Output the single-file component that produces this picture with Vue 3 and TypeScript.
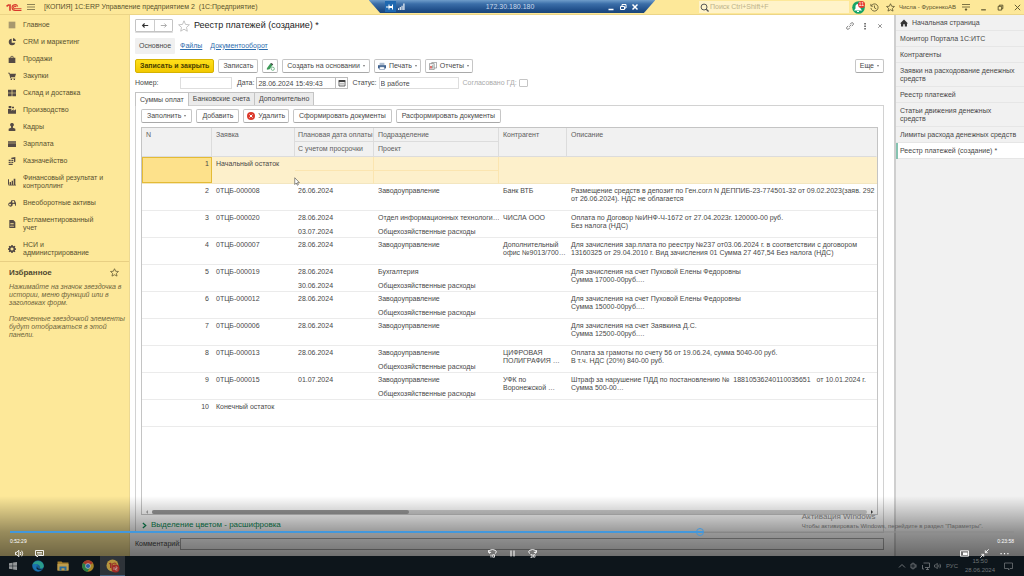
<script setup lang="ts">
import { ref } from 'vue'

interface Section { label: string; icon: string }
interface Payment {
  n: number
  request: string
  date?: string
  overdue?: string
  department?: string
  project?: string
  partner?: string
  description?: string
}

const sections: Section[] = [
  { label: 'Главное', icon: 'M1 1h10v10H1z' },
  { label: 'CRM и маркетинг', icon: 'M5.500 1A5 5 0 1 0 11 7H5.500zM7.500 0v4.500H12A5 5 0 0 0 7.500 0z' },
  { label: 'Продажи', icon: 'M1 4h2.500a2.500 3 0 0 1 5 0H11v8H1zM4.700 4h2.600a1.300 1.800 0 0 0-2.600 0z' },
  { label: 'Закупки', icon: 'M0 1h2.500l.5 1.500h9L10.500 7.500H4.500l.3 1H11v1H3.500L1.700 2.200H0zM4 10h2v2H4zM8.500 10h2v2h-2z' },
  { label: 'Склад и доставка', icon: 'M0 1h5.500v4.500H0zM6.500 1H12v4.500H6.500zM0 6.500h5.500V11H0zM6.500 6.500H12V11H6.500z' },
  { label: 'Производство', icon: 'M1 0h4v3.500H1zM0 4.500h5v2.500l3.500-2V7L12 5v6.500H0zM6 1h3v2.500H6z' },
  { label: 'Кадры', icon: 'M6 0a2.700 2.700 0 0 1 1.500 5L7.300 7 11 8.500V12H1V8.500L4.700 7 4.500 5A2.700 2.700 0 0 1 6 0z' },
  { label: 'Зарплата', icon: 'M0 2h12v2H0zM0 5h12v5.500H0z' },
  { label: 'Казначейство', icon: 'M5 1l6-1v7L9 8V3H5zM1 4h3v2H1zM5 4h3v2H5zM1 7h3v2H1zM5 7h3v2H5zM1 10h6v2H1z' },
  { label: 'Финансовый результат и контроллинг', icon: 'M0 2h1.500v9H0zM2.500 6h2v4h-2zM5.500 4h2v6h-2zM8.500 1h2.500v9H8.500zM0 10h12v1.200H0z' },
  { label: 'Внеоборотные активы', icon: 'M5 2h5l2 4v4h-1.500a2 2 0 1 0-3.500 0H6.200A3.200 3.200 0 1 1 4 5zM3 7a1.300 1.300 0 1 0 .1 0zM6.500 3v2.500h3L9 3z' },
  { label: 'Регламентированный учет', icon: 'M2 0h6l3 3v9H2zM3.500 5v1h5V5zM3.500 7v1h5V7zM3.500 9v1h2V9zM6.500 9v1h2V9z' },
  { label: 'НСИ и администрирование', icon: 'M5 0h2l.4 1.500 1 .4L9.800 1l1.300 1.300-.9 1.400.4 1L12 5v2l-1.400.4-.4 1 .9 1.300L9.800 11l-1.400-.8-1 .4L7 12H5l-.4-1.400-1-.4-1.300.8L1 9.700l.8-1.300-.4-1L0 7V5l1.400-.3.4-1L1 2.300 2.300 1l1.300.9 1-.4zM6 3.700A2.300 2.300 0 1 0 6.010 3.700z' },
]

const windows: string[] = [
  'Монитор Портала 1С:ИТС',
  'Контрагенты',
  'Заявки на расходование денежных средств',
  'Реестр платежей',
  'Статьи движения денежных\nсредств',
  'Лимиты расхода денежных средств',
  'Реестр платежей (создание) *',
]

const overhead = 'Общехозяйственные расходы'
const plant = 'Заводоуправление'

const payments: Payment[] = [
  { n: 1, request: 'Начальный остаток' },
  { n: 2, request: '0ТЦБ-000008', date: '26.06.2024', department: plant, partner: 'Банк ВТБ', description: 'Размещение средств в депозит по Ген.согл N ДЕППИБ-23-774501-32 от 09.02.2023(заяв. 292 от 26.06.2024). НДС не облагается' },
  { n: 3, request: '0ТЦБ-000020', date: '28.06.2024', overdue: '03.07.2024', department: 'Отдел информационных технологи…', project: overhead, partner: 'ЧИСЛА ООО', description: 'Оплата по Договор №ИНФ-Ч-1672 от 27.04.2023г. 120000-00 руб.\nБез налога (НДС)' },
  { n: 4, request: '0ТЦБ-000007', date: '28.06.2024', department: plant, partner: 'Дополнительный\nофис №9013/700…', description: 'Для зачисления зар.плата по реестру №237 от03.06.2024 г. в соответствии с договором\n13160325 от 29.04.2010 г. Вид зачисления 01 Сумма 27 467,54 Без налога (НДС)' },
  { n: 5, request: '0ТЦБ-000019', date: '28.06.2024', overdue: '30.06.2024', department: 'Бухгалтерия', project: overhead, description: 'Для зачисления на счет Пуховой Елены Федоровны\nСумма 17000-00руб.…' },
  { n: 6, request: '0ТЦБ-000012', date: '28.06.2024', department: plant, project: overhead, description: 'Для зачисления на счет Пуховой Елены Федоровны\nСумма 15000-00руб.…' },
  { n: 7, request: '0ТЦБ-000006', date: '28.06.2024', department: plant, description: 'Для зачисления на счет Заявкина Д.С.\nСумма 12500-00руб.…' },
  { n: 8, request: '0ТЦБ-000013', date: '28.06.2024', department: plant, project: overhead, partner: 'ЦИФРОВАЯ\nПОЛИГРАФИЯ …', description: 'Оплата за грамоты по счету 56 от 19.06.24, сумма 5040-00 руб.\nВ т.ч. НДС (20%) 840-00 руб.' },
  { n: 9, request: '0ТЦБ-000015', date: '01.07.2024', department: plant, project: overhead, partner: 'УФК по\nВоронежской …', description: 'Штраф за нарушение ПДД по постановлению №  18810536240110035651   от 10.01.2024 г.\nСумма 500-00…' },
  { n: 10, request: 'Конечный остаток' },
]

const docNumber = ref('')
const docDate = ref('28.06.2024 15:49:43')
const status = ref('В работе')
const comment = ref('')
const search = ref('')
const approved = ref(false)
const selected = ref(1)
const progress = 69
</script>

<template>
  <div class="screen">
    <header class="titlebar">
      <svg class="logo" viewBox="0 0 30 16" aria-label="1C">
        <path d="M1 6l4.500-3.500M7.500 2v12" fill="none" stroke="#d8382c" stroke-width="3" />
        <path d="M22 6A5.500 5.500 0 1 0 17 13.500h12M19 7A2.500 2.500 0 1 0 17 10.500h12" fill="none" stroke="#d8382c" stroke-width="2" />
      </svg>
      <button class="plain" aria-label="Меню"><svg class="i8" viewBox="0 0 8 8"><path d="M0 1.500h8M0 4h8M0 6.500h8" stroke="#8d8355" /></svg></button>
      <span class="app-name">[КОПИЯ] 1С:ERP Управление предприятием 2&nbsp; (1С:Предприятие)</span>
      <label class="search">
        <svg class="i9" viewBox="0 0 10 10"><circle cx="4.500" cy="4.500" r="3.300" fill="none" stroke="#555" stroke-width="1.100" /><path d="M7 7l2.500 2.500" stroke="#555" stroke-width="1.500" /></svg>
        <input v-model="search" type="text" placeholder="Поиск Ctrl+Shift+F" aria-label="Поиск" />
      </label>
      <button class="bell" aria-label="Уведомления">
        <svg viewBox="0 0 13 13"><circle cx="6.500" cy="6.500" r="6.300" fill="#16a468" /><path d="M6 3a2.500 2.500 0 0 1 2.500 2.500v2L10 9.500H2l1.500-2v-2A2.500 2.500 0 0 1 6 3zM5 10h2v1H5z" fill="#fff" /></svg>
        <span class="badge">11</span>
      </button>
      <button class="plain" aria-label="История"><svg class="i9" viewBox="0 0 10 10"><path d="M1.500 3A4 4 0 1 1 1 5.500M1 1v2.500h2.500M5 2.800v2.700l2 1" fill="none" stroke="#5a532e" stroke-width=".9" /></svg></button>
      <button class="plain" aria-label="Избранное"><svg class="i9" viewBox="0 0 10 10"><path d="M5 .8l1.300 2.800 3.100.3-2.300 2.100.7 3L5 7.500 2.200 9l.7-3L.6 3.900l3.100-.3z" fill="none" stroke="#5a532e" stroke-width=".9" /></svg></button>
      <span class="user">Числа - ФурсенкоАВ</span>
      <button class="plain" aria-label="Настройки"><svg class="i8" viewBox="0 0 8 8"><path d="M0 1.500h8M0 4h8M3 6h2l-1 1.500z" stroke="#5a532e" stroke-width=".8" fill="#5a532e" /></svg></button>
      <div class="win-buttons">
        <button class="plain" aria-label="Свернуть"><svg class="i6" viewBox="0 0 6 6"><path d="M1 5h4" stroke="#5a532e" /></svg></button>
        <button class="plain" aria-label="Развернуть"><svg class="i6" viewBox="0 0 6 6"><path d="M1 2h3v3.200H1zM2 2V1h3v3H4" fill="none" stroke="#5a532e" stroke-width=".8" /></svg></button>
        <button class="plain" aria-label="Закрыть"><svg class="i6" viewBox="0 0 6 6"><path d="M.7.7l4.600 4.600M5.300.7L.7 5.300" stroke="#5a532e" stroke-width=".8" /></svg></button>
      </div>
    </header>

    <div class="rdp">
      <span class="pin"><svg viewBox="0 0 8 6"><path d="M0 3h3M3 .5v5M6.500 .5v5" fill="none" stroke="#fff" /><path d="M3 2h3.500v2H3z" fill="#fff" /></svg></span>
      <svg class="signal" viewBox="0 0 8 8"><path d="M0 6h1.300v2H0zM2 4.500h1.300V8H2zM4 3h1.300v5H4zM6 .5h1.500V8H6z" fill="#e8eef5" /></svg>
      <span class="address">172.30.180.180</span>
      <svg class="rdp-btn" viewBox="0 0 8 8"><path d="M1.500 6.500h5" stroke="#fff" stroke-width="1.300" /></svg>
      <svg class="rdp-btn" viewBox="0 0 8 8"><path d="M1.500 3.500h4v3h-4zM3 3V1.500h4V5H6" fill="none" stroke="#fff" /></svg>
      <svg class="rdp-btn" viewBox="0 0 8 8"><path d="M1.500 1.500l5 5M6.500 1.500l-5 5" stroke="#fff" stroke-width="1.500" /></svg>
    </div>

    <div class="body">
      <aside class="sidebar">
        <nav class="sections">
          <a v-for="(s, i) in sections" :key="s.label" href="#" class="section">
            <svg class="i8" :class="{ faded: i === 0 }" viewBox="0 0 12 12"><path :d="s.icon" fill="#544a45" fill-rule="evenodd" /></svg>
            <span>{{ s.label }}</span>
          </a>
        </nav>
        <section class="favorites">
          <h2>Избранное
            <svg class="i9" viewBox="0 0 10 10"><path d="M5 .8l1.300 2.800 3.100.3-2.300 2.100.7 3L5 7.500 2.200 9l.7-3L.6 3.900l3.100-.3z" fill="none" stroke="#655d37" stroke-width=".9" /></svg>
          </h2>
          <p>Нажимайте на значок звездочка в истории, меню функций или в заголовках форм.</p>
          <p>Помеченные звездочкой элементы будут отображаться в этой панели.</p>
        </section>
      </aside>

      <main class="form">
        <div class="heading">
          <div class="history">
            <button aria-label="Назад"><svg viewBox="0 0 10 8"><path d="M9 4H2M4.500 1.500L2 4l2.500 2.500" fill="none" stroke="#333" stroke-width="1.400" /></svg></button>
            <button aria-label="Вперед"><svg viewBox="0 0 10 8"><path d="M1 4h7M5.500 1.500L8 4 5.500 6.500" fill="none" stroke="#aaa" stroke-width="1.200" /></svg></button>
          </div>
          <svg class="i12" viewBox="0 0 12 12"><path d="M6 .8l1.500 3.600 3.900.4-2.900 2.600.8 3.800L6 9.200l-3.300 2 .8-3.800L.6 4.800l3.900-.4z" fill="none" stroke="#b5b5b5" stroke-width=".8" /></svg>
          <h1>Реестр платежей (создание) *</h1>
          <div class="form-tools">
            <button class="plain" aria-label="Ссылка"><svg class="i8" viewBox="0 0 10 10"><path d="M4 6l2.500-2.500M5 3l1.500-1.700a1.600 1.600 0 0 1 2.300 2.300L7.200 5.200M5 7L3.500 8.700a1.600 1.600 0 0 1-2.300-2.300L2.800 4.800" fill="none" stroke="#666" /></svg></button>
            <button class="plain" aria-label="Еще"><svg class="i8" viewBox="0 0 8 8"><path d="M3.300 1h1.500v1.500H3.300zM3.300 3.500h1.500V5H3.300zM3.300 6h1.500v1.500H3.300z" fill="#555" /></svg></button>
            <button class="plain" aria-label="Закрыть форму"><svg class="i8" viewBox="0 0 8 8"><path d="M2.200 2.200l3.600 3.600M5.800 2.200L2.200 5.800" stroke="#777" stroke-width=".8" /></svg></button>
          </div>
        </div>

        <nav class="links">
          <span class="current">Основное</span>
          <a href="#">Файлы</a>
          <a href="#">Документооборот</a>
        </nav>

        <div class="bar commands">
          <button class="btn primary">Записать и закрыть</button>
          <button class="btn">Записать</button>
          <button class="btn square" aria-label="Провести"><svg class="i9" viewBox="0 0 10 10"><path d="M1 7l4-5.500L7.500 3 4 8l-3 .5z" fill="#3c9a58" /><path d="M5 2l1-1 2 1.500-.7 1z" fill="#444" /><circle cx="7.500" cy="7.500" r="1.800" fill="#fff" stroke="#4aa565" stroke-width=".8" /></svg></button>
          <button class="btn">Создать на основании<i class="caret" /></button>
          <button class="btn iconed"><svg class="i8" viewBox="0 0 10 10"><path d="M2 1h6v3H2z" fill="#aebdd0" /><path d="M0 4h10v4H0z" fill="#3d5f8c" /><path d="M2 6h6v3.500H2z" fill="#fff" stroke="#3d5f8c" stroke-width=".6" /></svg>Печать<i class="caret" /></button>
          <button class="btn iconed"><svg class="i8" viewBox="0 0 10 10"><path d="M3.500.5h6v7h-6z" fill="#fff" stroke="#777" stroke-width=".8" /><path d="M.5 2h6v7.500h-6z" fill="#f4f4f4" stroke="#777" stroke-width=".8" /><path d="M1.500 5h2v3h-2z" fill="#d9534f" /><path d="M4 4h1.300v4H4z" fill="#8aa39a" /></svg>Отчеты<i class="caret" /></button>
          <button class="btn more">Еще<i class="caret" /></button>
        </div>

        <div class="fields">
          <label class="f-number"><span>Номер:</span><input v-model="docNumber" type="text" /></label>
          <label class="f-date"><span>Дата:</span><input v-model="docDate" type="text" /></label>
          <button class="calendar" aria-label="Выбрать дату"><svg viewBox="0 0 8 8"><path d="M1 2.500h6v4.500H1z" fill="#fff" stroke="#444" stroke-width=".8" /><path d="M.6 1h6.800v2H.6z" fill="#444" /><path d="M2 4.700h4M3 3.500v3M5 3.500v3" stroke="#888" stroke-width=".5" /></svg></button>
          <label class="f-status"><span>Статус:</span><input v-model="status" type="text" /></label>
          <label class="f-approved"><span>Согласовано ГД:</span><input v-model="approved" type="checkbox" disabled /></label>
        </div>

        <div class="tabs">
          <button class="active">Суммы оплат</button>
          <button>Банковские счета</button>
          <button>Дополнительно</button>
        </div>

        <section class="panel">
          <div class="bar">
            <button class="btn">Заполнить<i class="caret" /></button>
            <button class="btn">Добавить</button>
            <button class="btn iconed">
              <svg class="i8" viewBox="0 0 8 8"><circle cx="4" cy="4" r="4" fill="#dc3a2d" /><path d="M2.500 2.500l3 3M5.500 2.500l-3 3" stroke="#fff" /></svg>Удалить</button>
            <button class="btn">Сформировать документы</button>
            <button class="btn">Расформировать документы</button>
          </div>

          <div class="grid-box">
            <table>
              <colgroup><col class="c-n" /><col class="c-req" /><col class="c-date" /><col class="c-dep" /><col class="c-part" /><col /></colgroup>
              <thead>
                <tr><th rowspan="2">N</th><th rowspan="2">Заявка</th><th>Плановая дата оплаты</th><th>Подразделение</th><th rowspan="2">Контрагент</th><th rowspan="2">Описание</th></tr>
                <tr><th class="second">С учетом просрочки</th><th class="second">Проект</th></tr>
              </thead>
              <tbody>
                <tr v-for="p in payments" :key="p.n" :class="{ selected: p.n === selected }" @click="selected = p.n">
                  <td class="num">{{ p.n }}</td>
                  <td>{{ p.request }}</td>
                  <td class="pair"><div>{{ p.date }}</div><div>{{ p.overdue }}</div></td>
                  <td class="pair"><div>{{ p.department }}</div><div>{{ p.project }}</div></td>
                  <td class="multi">{{ p.partner }}</td>
                  <td class="multi">{{ p.description }}</td>
                </tr>
              </tbody>
            </table>
            <div class="scroll"><i class="arrow left" /><div class="track"><div class="thumb" /></div><i class="arrow right" /></div>
          </div>

          <button class="legend"><svg viewBox="0 0 6 8"><path d="M1 1l3.500 3L1 7" fill="none" stroke="#0b8a55" stroke-width="1.500" /></svg>Выделение цветом - расшифровка</button>
        </section>

        <label class="comment"><span>Комментарий:</span><input v-model="comment" type="text" /></label>
      </main>

      <nav class="windows">
        <a href="#" class="home"><svg class="i8" viewBox="0 0 10 10"><path d="M5 .5L10 5.500H8.700V9.500H6V6.500H4v3H1.300v-4H0z" fill="#333" /></svg>Начальная страница</a>
        <a v-for="(w, i) in windows" :key="w" href="#" :class="{ open: i === windows.length - 1 }">{{ w }}</a>
      </nav>
    </div>

    <footer class="taskbar">
      <button aria-label="Пуск"><svg class="i8" viewBox="0 0 8 8"><path d="M0 1.200L3.600.7v3H0zM4.100.6L8 0v3.700H4.100zM0 4.200h3.600v3L0 6.800zM4.100 4.200H8V8l-3.900-.6z" fill="#a4a8aa" /></svg></button>
      <button aria-label="Edge"><svg class="i12" viewBox="0 0 12 12"><circle cx="6" cy="6" r="5.800" fill="#1769a5" /><path d="M.5 5A5.800 5.800 0 0 1 11.800 6c0 2-1.800 2.800-3.800 2.300C9 5 5 3 .5 5z" fill="#2fae9b" /><path d="M4.500 6c-1 3 1.500 5 5 4.300A5.800 5.800 0 0 1 .6 4.800C2 3.700 5 4 6.300 5z" fill="#1d7fc4" /><path d="M5 6.500c0 2 2.500 3 5.500 2.300-1 1-5 1.700-6-.3z" fill="#0c2536" /></svg></button>
      <button aria-label="Проводник"><svg class="i12" viewBox="0 0 12 12"><path d="M.5 1.500h4l1 1h6v8H.5z" fill="#b98e32" /><path d="M.5 4h11v6.500H.5z" fill="#d3ae55" /><path d="M2.500 6.500h7v4h-2V8.300h-3v2.200h-2z" fill="#2e77ad" /></svg></button>
      <button aria-label="Chrome"><svg class="i12" viewBox="0 0 12 12"><circle cx="6" cy="6" r="5.800" fill="#b9942a" /><path d="M6 6L1 3a5.800 5.800 0 0 1 10 0z" fill="#b8402f" /><path d="M6 6L1 3a5.800 5.800 0 0 0 4.500 8.800L8 7.500z" fill="#2b8a4b" /><circle cx="6" cy="6" r="2.700" fill="#c6cacc" /><circle cx="6" cy="6" r="2.100" fill="#2f6bb8" /></svg></button>
      <button class="running" aria-label="1С"><svg class="i14" viewBox="0 0 14 14"><circle cx="6.500" cy="6.500" r="6" fill="#c9a545" /><path d="M3 5l1.500-1v5M6 4v5M10.500 5A2.500 2.500 0 1 0 9 9" fill="none" stroke="#a3352a" /><circle cx="9.500" cy="9.500" r="4" fill="#b3302a" /><path d="M8 8v3M9.500 8h1.500v1.500H9.500V11h2" fill="none" stroke="#d9b7b3" stroke-width=".8" /></svg></button>
      <div class="tray">
        <svg class="i8" viewBox="0 0 8 8"><path d="M1 5.500l3-3 3 3" fill="none" stroke="#7b8083" /></svg>
        <svg class="i8" viewBox="0 0 8 8"><path d="M1 2h4v4H1zM3 2V.5M3 6v1.500M6 2.500v3M2.500 4h1" fill="none" stroke="#7b8083" stroke-width=".9" /></svg>
        <svg class="i8" viewBox="0 0 8 8"><path d="M1.500 1H7.500v4.500H3M4 7.500h3M5.500 5.500v2M.5 3v4h1.500" fill="none" stroke="#7b8083" stroke-width=".9" /></svg>
        <svg class="i8" viewBox="0 0 8 8"><path d="M.5 3h1l1.700-1.700v5.400L1.500 5h-1zM4.500 2.800q1 1.200 0 2.400M5.800 1.800q1.700 2.200 0 4.400" fill="none" stroke="#7b8083" stroke-width=".8" /></svg>
        <span class="lang">РУС</span>
        <time><span>15:50</span><span>28.06.2024</span></time>
        <svg class="i9" viewBox="0 0 9 9"><path d="M.5 1h8v5.500H6L4.500 8V6.500h-4z" fill="none" stroke="#7b8083" stroke-width=".8" /></svg>
      </div>
    </footer>

    <div class="watermark"><strong>Активация Windows</strong><span>Чтобы активировать Windows, перейдите в раздел "Параметры".</span></div>

    <div class="player">
      <div class="timeline"><div class="played" :style="{ width: progress + '%' }"><i class="knob" /></div></div>
      <div class="times"><span>0:52:29</span><span>0:23:58</span></div>
      <div class="controls">
        <div class="group left">
          <button aria-label="Громкость"><svg class="i9" viewBox="0 0 9 9"><path d="M.5 3.300h1.300l2-2v6.400l-2-2H.5zM5.300 3q1 1.500 0 3M6.700 1.700q2 2.800 0 5.600" fill="none" stroke="#fff" stroke-width=".9" /></svg></button>
          <button aria-label="Субтитры"><svg class="i9" viewBox="0 0 9 9"><path d="M.5 1.500h8v5H3.500L2 8V6.500H.5z" fill="none" stroke="#fff" stroke-width=".9" /><path d="M2 3.500h5M2 5h5" stroke="#fff" stroke-width=".8" /></svg></button>
        </div>
        <div class="group center">
          <button aria-label="Назад на 10 секунд"><svg class="i9" viewBox="0 0 9 9"><path d="M2 4.500A3.800 2.200 0 1 1 7 4.500M.7 1v2.400h2.400" fill="none" stroke="#fff" stroke-width=".9" /><path d="M3 5.500v3M4.700 5.700h1.800v2.500H4.700z" fill="none" stroke="#fff" stroke-width=".8" /></svg></button>
          <button aria-label="Пауза"><svg class="i9" viewBox="0 0 9 9"><path d="M3 1.500v6M6 1.500v6" stroke="#fff" /></svg></button>
          <button aria-label="Вперед на 30 секунд"><svg class="i9" viewBox="0 0 9 9"><path d="M7 4.500A3.800 2.200 0 1 0 2 4.500M8.300 1v2.400H5.900" fill="none" stroke="#fff" stroke-width=".9" /><path d="M2.500 5.500h1.700v3H2.500M2.800 7h1.400M5.500 5.700h1.500v2.500H5.500z" fill="none" stroke="#fff" stroke-width=".7" /></svg></button>
        </div>
        <div class="group right">
          <button aria-label="Мини-окно"><svg class="i9" viewBox="0 0 9 9"><path d="M.5 1.800h8v5.400h-8z" fill="none" stroke="#fff" stroke-width=".9" /><path d="M3 3.500h4.500v2.500H3z" fill="#fff" /></svg></button>
          <button aria-label="Свернуть видео"><svg class="i9" viewBox="0 0 9 9"><path d="M8.700.3L5.500 3.500M5.300 1.300v2.400h2.400M.3 8.700l3.200-3.200M1.300 5.300h2.400v2.400" fill="none" stroke="#fff" stroke-width=".9" /></svg></button>
          <button aria-label="Другие действия"><svg class="i9" viewBox="0 0 9 9"><path d="M.5 4h1.200v1.200H.5zM3.900 4h1.200v1.200H3.900zM7.300 4h1.200v1.200H7.300z" fill="#fff" /></svg></button>
        </div>
      </div>
    </div>

    <svg class="cursor" viewBox="0 0 8 12"><path d="M1 1v9l2-2 1.500 3 1.300-.7L4.500 7.500h2.700z" fill="#fff" stroke="#444" stroke-width=".8" /></svg>
  </div>
</template>

<style>
html, body { margin: 0; background: #0d161d; }
</style>

<style scoped>
.screen {
  position: relative;
  display: flex;
  flex-direction: column;
  min-height: 100vh;
  font: 7px/8px "Liberation Sans", Arial, sans-serif;
  color: #484848;
  background: #fff;
  overflow: hidden;
}
* { box-sizing: border-box; }
button, input { font: inherit; color: inherit; margin: 0; padding: 0; }
button { border: 0; background: none; white-space: nowrap; }
a { color: inherit; text-decoration: none; }
svg { display: block; flex: none; }
.i6 { width: 7px; height: 7px; }
.i8 { width: 8px; height: 8px; }
.i9 { width: 9px; height: 9px; }
.i12 { width: 12px; height: 12px; }
.i14 { width: 14px; height: 14px; }

.titlebar { display: flex; align-items: center; height: 15px; padding: 0 3px 0 6px; background: #fde899; border-bottom: 1px solid #ecd587; color: #5a532e; }
.logo { width: 16px; height: 9px; margin-right: 5px; }
.app-name { margin-left: 9px; flex: 1; }
.search { display: flex; align-items: center; width: 150px; height: 12px; background: #fff3c9; padding-left: 1px; gap: 1px; }
.search input { flex: 1; min-width: 0; border: 0; background: none; outline: none; }
.search input::placeholder { color: #bdb28a; }
.bell { position: relative; width: 13px; height: 13px; margin: 0 5px 0 3px; }
.bell svg { width: 13px; height: 13px; }
.badge { position: absolute; top: 0; right: 0; width: 7px; height: 7px; border-radius: 4px; background: #e5392d; color: #fff; font-size: 5px; line-height: 7px; text-align: center; }
.titlebar > .bell + .plain { margin-right: 7px; }
.user { margin: 0 6px 0 4px; font-size: 6px; }
.win-buttons { display: flex; gap: 10px; margin-left: 10px; }

.rdp { position: absolute; top: 0; left: 36%; right: 36%; height: 13px; display: flex; align-items: center; padding: 0 16px; color: #c9daec; background: linear-gradient(#6f9dca, #3b6ea8 30%, #21508b 75%, #1c4679); clip-path: polygon(0 0, 100% 0, 96% 100%, 4% 100%); }
.pin { display: grid; place-items: center; width: 11px; height: 11px; background: #1f68b0; }
.pin svg { width: 8px; height: 6px; }
.signal { width: 7px; height: 7px; margin-left: 2px; }
.address { flex: 1; text-align: center; padding-left: 12px; }
.rdp-btn { width: 8px; height: 8px; margin-left: 4px; }

.body { flex: 1; display: flex; }
.sidebar { width: 130px; background: #fde899; border-right: 1px solid #ecd993; color: #58502f; }
.sections { padding-top: 1px; border-bottom: 1px solid #e8cf83; }
.section { display: flex; align-items: center; gap: 7px; padding: 5px 24px 4px 8px; }
.faded { opacity: .5; }
.favorites { padding: 5px 4px 5px 9px; font-style: italic; color: #6f663e; }
.favorites h2 { display: flex; justify-content: space-between; align-items: center; margin: 0 6px 5px 0; font: bold 8px/11px "Liberation Sans", Arial, sans-serif; color: #4f4930; }
.favorites p { margin: 0 0 8px; }

.form { flex: 1; min-width: 0; display: flex; flex-direction: column; padding: 4px 10px 6px 5px; }
.heading { display: flex; align-items: center; height: 13px; }
.history { display: flex; border: 1px solid #c4c4c4; border-radius: 1px; box-shadow: 0 1px 0 #ddd; margin-right: 5px; }
.history button { width: 18px; height: 11px; display: grid; place-items: center; }
.history button + button { border-left: 1px solid #ccc; }
.history svg { width: 8px; height: 7px; }
h1 { margin: 0 0 0 4px; font: 9px/13px "Liberation Sans", Arial, sans-serif; color: #222; }
.form-tools { display: flex; gap: 7px; margin-left: auto; }
.links { display: flex; align-items: center; gap: 8px; margin-top: 5px; height: 17px; }
.links .current { padding: 4px; background: #f0f0f0; border-radius: 1px; margin-right: -3px; }
.links a { color: #2d6dae; text-decoration: underline; }
.bar { display: flex; gap: 4px; }
.commands { margin-top: 5px; }
.btn { display: flex; align-items: center; justify-content: center; height: 14px; padding: 0 5px; border: 1px solid #c6c6c6; border-bottom-color: #a9a9a9; border-radius: 2px; background: #fff; }
.commands .btn { padding: 0 4px; }
.commands .primary { background: linear-gradient(#ffe01a, #f2c800); border-color: #d5b200; font-weight: bold; color: #4a3f00; }
.commands .square { width: 16px; padding: 0; }
.iconed, .commands .iconed { gap: 3px; padding: 0 3px; }
.more { margin-left: auto; }
.caret { width: 0; margin-left: 3px; border: 2px solid transparent; border-top-color: #777; border-bottom: 0; border-left-width: 1px; border-right-width: 1px; }
.iconed .caret { margin-left: 0; }
.commands .more { padding: 0 4px; }
.fields { display: flex; align-items: center; margin-top: 4px; height: 12px; }
.fields label, .comment { display: flex; align-items: center; }
.fields input[type="text"], .comment input { height: 12px; border: 1px solid #dedede; padding: 0 1px; background: #fff; outline: none; }
.f-number span, .comment span { width: 45px; flex: none; }
.f-number input { width: 52px; }
.f-date { margin-left: 5px; }
.f-date input[type="text"] { width: 80px; margin-left: 2px; border-color: #bdbdbd; }
.calendar { display: grid; place-items: center; width: 12px; height: 12px; border: 1px solid #bdbdbd; border-left: 0; }
.calendar svg { width: 8px; height: 8px; }
.f-status { margin-left: 4px; }
.f-status input[type="text"] { width: 80px; margin-left: 2px; }
.f-approved { margin-left: 4px; color: #aaa; }
.f-approved input { appearance: none; width: 9px; height: 8px; margin-left: 2px; border: 1px solid #c5c5c5; border-radius: 1px; }
.tabs { display: flex; margin-top: 3px; }
.tabs button { height: 13px; padding: 0 4px; background: #ebebeb; border: 1px solid #c4c4c4; border-left-width: 0; border-bottom: 0; }
.tabs .active { position: relative; z-index: 1; background: #fff; border-left-width: 1px; margin-bottom: -1px; height: 14px; }

.panel { flex: 1; display: flex; flex-direction: column; border: 1px solid #d2d2d2; padding: 3px 5px 2px; }
.grid-box { flex: 1; display: flex; flex-direction: column; margin-top: 4px; border: 1px solid #c4c4c4; }
table { width: 100%; border-collapse: separate; border-spacing: 0; table-layout: fixed; }
.c-n { width: 70px; }
.c-req { width: 83px; }
.c-date { width: 79px; }
.c-dep { width: 125px; }
.c-part { width: 68px; }
th { padding: 3px 3px 2px 4px; text-align: left; vertical-align: top; font-weight: normal; background: #f1f1f1; border-right: 1px solid #dcdcdc; border-bottom: 1px solid #dcdcdc; color: #606060; white-space: nowrap; height: 14px; }
thead tr:first-child th:last-child { border-right-color: #f1f1f1; }
th.second { height: 15px; }
th:nth-child(3) { padding-right: 0; padding-left: 3px; }
th.second:first-child, td:nth-child(3) { padding-left: 3px; }
td { height: 27px; padding: 3px 3px 0 4px; vertical-align: top; border-bottom: 1px solid #ebebeb; white-space: nowrap; overflow: hidden; }
.num { text-align: right; }
.pair { padding-right: 0; }
.pair div + div { margin-top: 6px; }
.multi { white-space: pre-wrap; padding-right: 0; }
.selected td { background: #fdf0cb; border-bottom-color: #f3e6c0; }
.selected .pair { background: linear-gradient(#fdf0cb 13px, #fbe5b0 13px, #fbe5b0 14px, #fdf0cb 14px); border-right: 1px solid #fbe5b0; }
.selected .num { background: #fde18b; box-shadow: inset 0 0 0 1px #e4bb35; }
.scroll { display: flex; align-items: center; gap: 4px; margin-top: auto; padding: 0 4px; }
.track { flex: 1; height: 4px; border-radius: 2px; background: #cfcfcf; }
.thumb { width: 36%; height: 4px; border-radius: 2px; background: #979797; }
.arrow { width: 0; border: 2px solid transparent; }
.arrow.left { border-left-width: 0; border-right-color: #aaa; }
.arrow.right { border-right-width: 0; border-left-color: #444; }
.legend { align-self: flex-start; display: flex; align-items: center; gap: 4px; margin: 5px 0 0 1px; font-size: 8px; line-height: 10px; color: #0b8a55; }
.legend svg { width: 5px; height: 7px; }
.comment { margin-top: 5px; }
.comment input { flex: 1; min-width: 0; border-color: #aaa; }

.windows { width: 130px; background: #f1f1f1; border-left: 2px solid #cfcfcf; }
.windows a { display: block; padding: 4px 2px 4px 4px; box-shadow: inset 0 -1px 0 #e6e6e6; white-space: pre-line; }
.windows a.home { display: flex; gap: 4px; }
.windows a.open { background: #fff; border-left: 2px solid #86c3b1; padding-left: 2px; }

.taskbar { display: flex; height: 20px; background: #0e171e; color: #7b8083; }
.taskbar button { width: 25px; display: grid; place-items: center; }
.taskbar .running { background: #33393f; border-bottom: 1px solid #48698a; }
.tray { margin-left: auto; display: flex; align-items: center; gap: 4px; padding-right: 11px; }
.lang { font-size: 6px; }
.tray time { display: flex; flex-direction: column; align-items: center; margin: 0 5px 0 3px; font-size: 6px; line-height: 9px; }

.watermark { position: absolute; right: 4%; bottom: 46px; display: flex; flex-direction: column; font-size: 6px; color: #8d8d8d; }
.watermark strong { font-size: 8px; line-height: 10px; font-weight: normal; }

.player { position: absolute; left: 0; right: 0; bottom: 0; padding: 35px 10px 17px; background: linear-gradient(transparent, rgba(0, 0, 0, .4) 45%, rgba(0, 0, 0, .56) 75%, rgba(0, 0, 0, .1) 75%); color: #fff; }
.timeline { height: 2px; background: rgba(140, 140, 140, .6); }
.played { position: relative; height: 2px; background: #4398dc; }
.knob { position: absolute; right: -1px; top: -3px; width: 8px; height: 8px; border: 1px solid #4398dc; border-radius: 50%; }
.times { display: flex; justify-content: space-between; margin-top: 4px; font-size: 5px; }
.controls { display: grid; grid-template-columns: 1fr auto 1fr; margin: 4px 5px 1px; }
.group { display: flex; gap: 11px; }
.group.right { justify-content: flex-end; }
.cursor { position: absolute; left: 294px; top: 177px; width: 6px; height: 9px; }
</style>
